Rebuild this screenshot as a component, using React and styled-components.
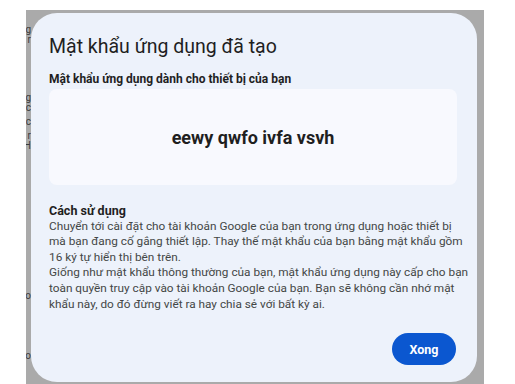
import React from 'react';
import styled, { createGlobalStyle } from 'styled-components';

const GlobalStyle = createGlobalStyle`
  html, body {
    margin: 0;
    padding: 0;
    background: #ffffff;
    font-family: Roboto, "Noto Sans", "Liberation Sans", sans-serif;
  }
`;

const Page = styled.div`
  width: 515px;
  height: 384px;
  overflow: hidden;
  padding-top: 10px;
  box-sizing: border-box;
`;

const Scrim = styled.div`
  margin-left: 26px;
  width: 458px;
  height: 374px;
  background: #aaaaaa;
  display: flex;
  box-sizing: border-box;
  padding: 3px 7px 0 0;
`;

const EdgeColumn = styled.div`
  width: 5px;
  overflow: hidden;
  display: flex;
  flex-direction: column;
  align-items: flex-end;
  padding-top: 12px;
  color: #3c3c3c;
  font-size: 10px;
  line-height: 10px;
  flex-shrink: 0;
`;

const EdgeChar = styled.span`
  display: block;
  margin-top: ${p => p.$gap || 0}px;
  white-space: nowrap;
`;

const Dialog = styled.div`
  flex: 1;
  height: 369px;
  background: #edf2fb;
  border-radius: 26px;
  box-sizing: border-box;
  padding: 22px 4px 0 18px;
  display: flex;
  flex-direction: column;
  color: #1f1f1f;
`;

const Title = styled.h1`
  margin: 0;
  font-size: 19.5px;
  font-weight: 400;
  line-height: 24px;
  color: #1f1f1f;
`;

const Label = styled.div`
  margin-top: 12px;
  font-size: 12px;
  font-weight: 700;
  line-height: 16px;
  color: #1f1f1f;
`;

const PasswordBox = styled.div`
  margin-top: 2px;
  width: 408px;
  height: 96px;
  border-radius: 8px;
  background: #f8f9fe;
  display: flex;
  align-items: center;
  justify-content: center;
`;

const Password = styled.span`
  font-size: 18px;
  font-weight: 700;
  color: #1f1f1f;
`;

const HowTo = styled.div`
  margin-top: 18px;
  font-size: 11.8px;
  line-height: 15.6px;
  color: #444746;
  width: 424px;
`;

const HowToTitle = styled.div`
  font-weight: 700;
  color: #1f1f1f;
  font-size: 12.5px;
`;

const Line = styled.span`
  display: block;
  white-space: nowrap;
`;

const Footer = styled.div`
  margin-top: auto;
  display: flex;
  justify-content: flex-end;
  padding: 0 17px 17px 0;
`;

const DoneButton = styled.button`
  width: 64px;
  height: 32px;
  border: none;
  border-radius: 16px;
  background: #0b57d0;
  color: #ffffff;
  font-family: inherit;
  font-size: 12.5px;
  font-weight: 700;
  cursor: pointer;
`;

const edgeChars = [
  { c: 'g', gap: 0 },
  { c: 'r', gap: 0 },
  { c: 'g', gap: 48 },
  { c: 'c', gap: 0 },
  { c: 'c', gap: 4 },
  { c: 'r', gap: 4 },
  { c: 'H', gap: 0 },
  { c: 'o', gap: 140 },
  { c: 'o', gap: 50 },
];

const howToLines = [
  'Chuyển tới cài đặt cho tài khoản Google của bạn trong ứng dụng hoặc thiết bị',
  'mà bạn đang cố gắng thiết lập. Thay thế mật khẩu của bạn bằng mật khẩu gồm',
  '16 ký tự hiển thị bên trên.',
  'Giống như mật khẩu thông thường của bạn, mật khẩu ứng dụng này cấp cho bạn',
  'toàn quyền truy cập vào tài khoản Google của bạn. Bạn sẽ không cần nhớ mật',
  'khẩu này, do đó đừng viết ra hay chia sẻ với bất kỳ ai.',
];

export default function App() {
  return (
    <Page>
      <GlobalStyle />
      <Scrim>
        <EdgeColumn>
          {edgeChars.map((e, i) => (
            <EdgeChar key={i} $gap={e.gap}>{e.c}</EdgeChar>
          ))}
        </EdgeColumn>
        <Dialog>
          <Title>Mật khẩu ứng dụng đã tạo</Title>
          <Label>Mật khẩu ứng dụng dành cho thiết bị của bạn</Label>
          <PasswordBox>
            <Password>eewy qwfo ivfa vsvh</Password>
          </PasswordBox>
          <HowTo>
            <HowToTitle>Cách sử dụng</HowToTitle>
            {howToLines.map((l, i) => (
              <Line key={i}>{l}</Line>
            ))}
          </HowTo>
          <Footer>
            <DoneButton>Xong</DoneButton>
          </Footer>
        </Dialog>
      </Scrim>
    </Page>
  );
}
